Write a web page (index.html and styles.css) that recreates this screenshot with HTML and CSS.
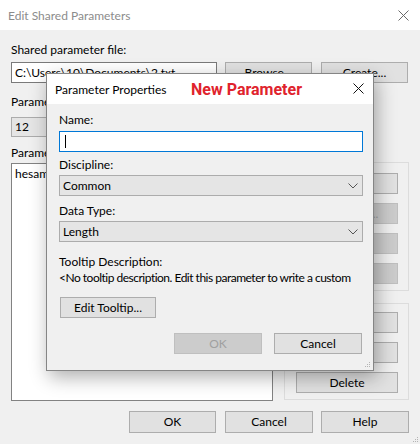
FILE: index.html
```html
<!DOCTYPE html>
<html>
<head>
<meta charset="utf-8">
<link rel="stylesheet" href="styles.css">
</head>
<body>
<div class="window">
  <div class="titlebar">
    <span class="title">Edit Shared Parameters</span>
    <svg class="close main-close" width="11" height="11" viewBox="0 0 11 11"><path d="M0.5 0.5 L10.5 10.5 M10.5 0.5 L0.5 10.5" stroke="#6a6a6a" stroke-width="1" fill="none"/></svg>
  </div>
  <div class="content">
    <div class="label first">Shared parameter file:</div>
    <div class="filerow">
      <div class="textbox file">C:\Users\10\Documents\2.txt</div>
      <div class="btn wbtn">Browse...</div>
      <div class="btn wbtn">Create...</div>
    </div>
    <div class="label second">Parameter group:</div>
    <div class="combo groupcombo">12</div>
    <div class="label third">Parameters:</div>
    <div class="main">
      <div class="listbox">hesam</div>
      <div class="side">
        <div class="gbox g1">
          <div class="btn sbtn">New...</div>
          <div class="btn sbtn disabled">Properties...</div>
          <div class="btn sbtn disabled">Move...</div>
          <div class="btn sbtn disabled">Delete</div>
        </div>
        <div class="gbox g2">
          <div class="btn sbtn">New...</div>
          <div class="btn sbtn">Rename...</div>
          <div class="btn sbtn">Delete</div>
        </div>
      </div>
    </div>
    <div class="bottom">
      <div class="btn bbtn">OK</div>
      <div class="btn bbtn">Cancel</div>
      <div class="btn bbtn">Help</div>
    </div>
  </div>
  <svg class="grip main-grip" width="7" height="7" viewBox="0 0 7 7"><g fill="#b4b4b4"><rect x="5" y="1" width="1" height="1"/><rect x="3" y="3" width="1" height="1"/><rect x="5" y="3" width="1" height="1"/><rect x="1" y="5" width="1" height="1"/><rect x="3" y="5" width="1" height="1"/><rect x="5" y="5" width="1" height="1"/></g></svg>

  <div class="dialog">
    <div class="dtitlebar">
      <span class="dtitle">Parameter Properties</span>
      <span class="newparam">New Parameter</span>
      <svg class="close dclose" width="11" height="11" viewBox="0 0 11 11"><path d="M0.5 0.5 L10.5 10.5 M10.5 0.5 L0.5 10.5" stroke="#111" stroke-width="1" fill="none"/></svg>
    </div>
    <div class="dbody">
      <div class="dlabel l-name">Name:</div>
      <div class="textbox focused"><span class="caret"></span></div>
      <div class="dlabel">Discipline:</div>
      <div class="combo select">Common<svg class="chev" width="10" height="6" viewBox="0 0 10 6"><polyline points="0.5,0.5 5,5 9.5,0.5" fill="none" stroke="#555" stroke-width="1"/></svg></div>
      <div class="dlabel">Data Type:</div>
      <div class="combo select">Length<svg class="chev" width="10" height="6" viewBox="0 0 10 6"><polyline points="0.5,0.5 5,5 9.5,0.5" fill="none" stroke="#555" stroke-width="1"/></svg></div>
      <div class="dlabel tipl">Tooltip Description:</div>
      <div class="tiptext">&lt;No tooltip description. Edit this parameter to write a custom</div>
      <div class="btn tipbtn">Edit Tooltip...</div>
      <div class="dactions">
        <div class="btn abtn disabled">OK</div>
        <div class="btn abtn">Cancel</div>
      </div>
    </div>
    <svg class="grip dgrip" width="7" height="7" viewBox="0 0 7 7"><g fill="#b4b4b4"><rect x="5" y="1" width="1" height="1"/><rect x="3" y="3" width="1" height="1"/><rect x="5" y="3" width="1" height="1"/><rect x="1" y="5" width="1" height="1"/><rect x="3" y="5" width="1" height="1"/><rect x="5" y="5" width="1" height="1"/></g></svg>
  </div>
</div>
</body>
</html>
```

FILE: styles.css
```css
* { box-sizing: border-box; }
html, body { margin: 0; padding: 0; }
body {
  width: 420px;
  height: 444px;
  overflow: hidden;
  background: #f0f0f0;
  font-family: Lato, "Noto Sans", sans-serif;
  font-size: 12px;
  color: #000;
}
.window {
  position: relative;
  width: 420px;
  height: 444px;
  background: #f0f0f0;
}
.titlebar {
  height: 30px;
  background: #fff;
  display: flex;
  align-items: center;
  justify-content: space-between;
  padding: 0 11px 0 8px;
}
.title { color: #8c8c8c; }
.close { display: block; }

.content { padding: 12px 11px 0 11px; }
.label { line-height: 16px; height: 16px; white-space: nowrap; }
.filerow { display: flex; margin-top: 4px; height: 21px; }
.textbox {
  border: 1px solid #7a7a7a;
  background: #fff;
  height: 21px;
  line-height: 19px;
  padding-left: 3px;
  white-space: nowrap;
  overflow: hidden;
}
.file { width: 206px; }
.btn {
  background: #e1e1e1;
  border: 1px solid #adadad;
  height: 21px;
  line-height: 19px;
  text-align: center;
  white-space: nowrap;
}
.btn.disabled { background: #cccccc; border-color: #bfbfbf; color: #a0a0a0; }
.wbtn { width: 87px; margin-left: 8px; }
.wbtn + .wbtn { margin-left: 9px; }
.second { margin-top: 11px; }
.combo {
  background: #e5e5e5;
  border: 1px solid #acacac;
  height: 20px;
  line-height: 18px;
  padding-left: 3px;
}
.groupcombo { width: 262px; margin-top: 7px; }
.third { margin-top: 8px; }
.main { display: flex; margin-top: 2px; height: 238px; }
.listbox {
  width: 262px;
  background: #fff;
  border: 1px solid #828282;
  padding: 2px 3px;
  line-height: 16px;
}
.side { margin-left: 11px; width: 125px; display: flex; flex-direction: column; }
.gbox {
  border: 1px solid #dcdcdc;
  display: flex;
  flex-direction: column;
  align-items: flex-start;
  padding-left: 11px;
}
.g1 { height: 129px; margin-top: -1px; padding-top: 10px; gap: 9px; }
.g2 { height: 97px; margin-top: 12px; padding-top: 8px; gap: 9px; }
.sbtn { width: 102px; }
.bottom { display: flex; justify-content: flex-end; margin-top: 10px; gap: 8px; }
.bbtn { width: 88px; height: 22px; line-height: 20px; }
.bbtn:nth-child(1) { width: 87px; margin-right: 1px; }

.grip { position: absolute; display: block; }
.main-grip { right: 1px; bottom: 1px; }

/* dialog overlay */
.dialog {
  position: absolute;
  left: 46px;
  top: 73px;
  width: 328px;
  height: 298px;
  background: #f0f0f0;
  border: 1px solid #858585;
  box-shadow: 3px 6px 18px rgba(0,0,0,0.32);
}
.dtitlebar {
  height: 30px;
  background: #fff;
  display: flex;
  align-items: center;
  padding-left: 8px;
  position: relative;
}
.dtitle { width: 136px; white-space: nowrap; }
.newparam {
  font-family: Roboto, "Noto Sans", sans-serif;
  font-weight: 700;
  font-size: 16px;
  color: #e0232d;
}
.dclose { position: absolute; right: 9px; top: 9px; }
.dbody { padding: 8px 11px 0 12px; }
.dlabel { line-height: 16px; height: 16px; margin-top: 5px; }
.l-name { margin-top: 0; }
.dbody .textbox { margin-top: 3px; width: 304px; height: 21px; position: relative; }
.focused { border-color: #0078d7; }
.caret { position: absolute; left: 5px; top: 3px; width: 1px; height: 13px; background: #000; }
.select {
  margin-top: 3px;
  width: 304px;
  height: 21px;
  line-height: 19px;
  position: relative;
}
.dlabel + .select { margin-top: 2px; }
.select + .dlabel { margin-top: 7px; }
.chev { position: absolute; right: 4px; top: 7px; }
.select + .tipl { margin-top: 12px; }
.tiptext { line-height: 16px; white-space: nowrap; margin-top: 0; letter-spacing: -0.5px; }
.tipbtn { width: 96px; margin-top: 11px; margin-left: 1px; }
.dactions { display: flex; justify-content: flex-end; gap: 12px; margin-top: 15px; }
.abtn { width: 88px; }
.dgrip { right: 2px; bottom: 2px; }
```
